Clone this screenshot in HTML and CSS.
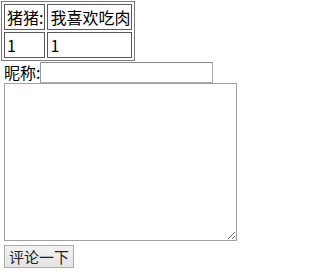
FILE: index.html
```html
<!DOCTYPE html>
<html>
<head>
<meta charset="utf-8">
<link rel="stylesheet" href="styles.css">
</head>
<body>
<table class="info">
  <tr><td>猪猪:</td><td>我喜欢吃肉</td></tr>
  <tr><td>1</td><td>1</td></tr>
</table>
<form class="comment">
  <div class="nick-row"><span class="nick-label">昵称:</span><input class="nick-input" type="text"></div>
  <textarea class="comment-box"></textarea>
  <button class="submit" type="button">评论一下</button>
</form>
</body>
</html>
```
FILE: styles.css
```css
html, body {
  margin: 0;
  padding: 0;
  background: #fff;
}
body {
  font-family: "Noto Sans CJK SC", "Microsoft YaHei", sans-serif;
  font-size: 16px;
  color: #000;
  padding: 1px 0 0 1px;
}
.info {
  border: 1px solid #7a7a7a;
  border-spacing: 2px;
  line-height: 22px;
}
.info td {
  border: 1px solid #5a5a5a;
  padding: 1px 1px 1px 2px;
  white-space: nowrap;
}
.comment {
  margin: 0 0 0 3px;
  display: flex;
  flex-direction: column;
  align-items: flex-start;
}
.nick-row {
  display: flex;
  align-items: center;
  height: 21px;
  margin-top: 1px;
}
.nick-label {
  line-height: 21px;
  width: 36px;
  white-space: nowrap;
}
.nick-input {
  box-sizing: border-box;
  width: 173px;
  height: 21px;
  margin: 0;
  padding: 0 2px;
  border: 1px solid #a9a9a9;
  border-top-color: #888;
  border-left-color: #999;
  font: inherit;
  background: #fff;
  outline: none;
}
.comment-box {
  box-sizing: border-box;
  width: 233px;
  height: 158px;
  margin: 0;
  padding: 2px;
  border: 1px solid #a0a0a0;
  resize: both;
  font: inherit;
  outline: none;
}
.submit {
  box-sizing: border-box;
  margin-top: 4px;
  width: 70px;
  height: 23px;
  padding: 0;
  font-family: "Noto Sans CJK SC", "Microsoft YaHei", sans-serif;
  font-size: 15px;
  line-height: 21px;
  color: #222;
  border: 1px solid #acacac;
  border-radius: 0;
  background: linear-gradient(#f2f2f2, #e4e4e4);
}
```
